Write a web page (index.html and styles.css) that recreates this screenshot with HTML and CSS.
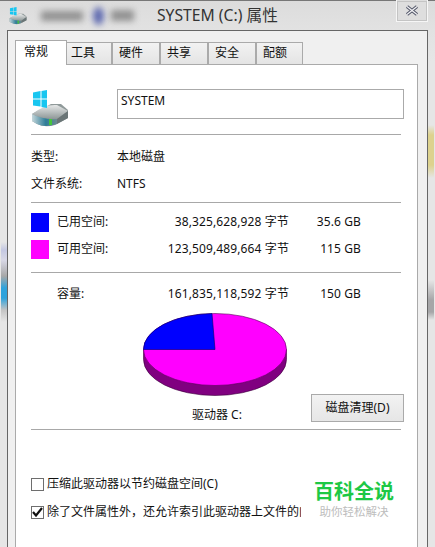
FILE: index.html
```html
<!DOCTYPE html>
<html lang="zh-CN">
<head>
<meta charset="utf-8">
<title>SYSTEM (C:) 属性</title>
<link rel="stylesheet" href="styles.css">
</head>
<body>
<svg class="defs" width="0" height="0" aria-hidden="true">
  <defs>
    <linearGradient id="driveTop" x1="0" y1="0" x2="0" y2="1">
      <stop offset="0" stop-color="#e6e8e8"/><stop offset="1" stop-color="#8d9696"/>
    </linearGradient>
    <linearGradient id="driveFront" x1="0" y1="0" x2="1" y2="0">
      <stop offset="0" stop-color="#c5d6da"/><stop offset="0.55" stop-color="#2f7d98"/><stop offset="1" stop-color="#6d8a90"/>
    </linearGradient>
    <symbol id="drive" viewBox="0 0 38 38">
      <path d="M1 24 L20 14 L30 14 L37 20 L37 28 L24 35 Q14 38 6 34 L1 31 Z" fill="#8f9999"/>
      <path d="M1 24 Q14 14 26 15 L37 21 L26 29 Q12 30 1 24 Z" fill="url(#driveTop)"/>
      <path d="M1 24 Q12 30 26 29 L26 34 Q14 38 6 34 L1 31 Z" fill="url(#driveFront)"/>
      <path d="M26 29 L37 21 L37 28 L26 34 Z" fill="#6a7576"/>
      <rect x="18" y="29" width="3" height="6" fill="#46c43c"/>
      <path d="M2 2.500 L9.500 1 V8.500 H2 Z M10.500 1 L16 0 V8.500 H10.500 Z M2 9.500 H9.500 V16.500 L2 15.500 Z M10.500 9.500 H16 V18 L10.500 17 Z" fill="#18c6f0"/>
    </symbol>
  </defs>
</svg>
<div class="window">
  <header class="titlebar">
    <svg class="title-icon"><use href="#drive"/></svg>
    <span class="blur blur-text-a"></span>
    <span class="blur blur-dot"></span>
    <span class="blur blur-text-b"></span>
    <h1 class="title">SYSTEM (C:) 属性</h1>
    <button class="close" type="button" aria-label="关闭">
      <svg width="14" height="11" viewBox="0 0 14 11"><path d="M2 1.500 L12 9.500 M12 1.500 L2 9.500" stroke="#54586a" stroke-width="3.400" fill="none"/><path d="M2 1.500 L12 9.500 M12 1.500 L2 9.500" stroke="#f4f4f6" stroke-width="1.200" fill="none"/></svg>
    </button>
  </header>
  <main class="dialog">
    <nav class="tabs">
      <span class="tab tab-active">常规</span>
      <span class="tab">工具</span>
      <span class="tab">硬件</span>
      <span class="tab">共享</span>
      <span class="tab">安全</span>
      <span class="tab tab-last">配额</span>
    </nav>
    <section class="sheet">
      <div class="name-row">
        <svg class="drive-icon"><use href="#drive"/></svg>
        <div class="name-box">SYSTEM</div>
      </div>
      <hr class="rule rule-a">
      <div class="info-row info-first"><span class="info-label">类型:</span><span>本地磁盘</span></div>
      <div class="info-row info-second"><span class="info-label">文件系统:</span><span>NTFS</span></div>
      <hr class="rule rule-b">
      <div class="space-row space-first"><i class="swatch swatch-used"></i><span class="space-label">已用空间:</span><span class="bytes">38,325,628,928 字节</span><span class="size">35.6 GB</span></div>
      <div class="space-row space-second"><i class="swatch swatch-free"></i><span class="space-label">可用空间:</span><span class="bytes">123,509,489,664 字节</span><span class="size">115 GB</span></div>
      <hr class="rule rule-c">
      <div class="space-row space-total"><i class="swatch"></i><span class="space-label">容量:</span><span class="bytes">161,835,118,592 字节</span><span class="size">150 GB</span></div>
      <div class="chart-area">
        <svg class="pie" width="146" height="86" viewBox="0 0 146 86">
          <path d="M0.500 36.500 V46.500 A71.500 36 0 0 0 143.500 46.500 V36.500 Z" fill="#800080" stroke="#3a003a" stroke-width="0.600"/>
          <ellipse cx="72" cy="36.500" rx="71.500" ry="36" fill="#ff00ff" stroke="#5a005a" stroke-width="0.600"/>
          <path d="M72 36.500 H0.500 A71.500 36 0 0 1 69 0.500 Z" fill="#0000ff" stroke="#00006a" stroke-width="0.600"/>
        </svg>
        <div class="chart-foot">
          <span class="drive-name">驱动器 C:</span>
          <button class="clean" type="button">磁盘清理(D)</button>
        </div>
      </div>
      <hr class="rule rule-d">
      <label class="check check-first"><i class="box"></i><span class="check-text">压缩此驱动器以节约磁盘空间(C)</span></label>
      <label class="check check-second"><i class="box"><svg width="11" height="10" viewBox="0 0 11 10"><path d="M1 5 L4 8.500 L10 1" stroke="#111" stroke-width="2.200" fill="none"/></svg></i><span class="check-text check-clip">除了文件属性外，还允许索引此驱动器上文件的内容</span></label>
    </section>
  </main>
</div>
<i class="edge edge-left"></i>
<i class="edge edge-right"></i>
<div class="watermark">
  <div class="wm-main">百科全说</div>
  <div class="wm-sub">助你轻松解决</div>
</div>
</body>
</html>
```
FILE: styles.css
```css
* { box-sizing: border-box; }
html, body { margin: 0; height: 100%; }
body {
  width: 435px;
  height: 547px;
  overflow: hidden;
  position: relative;
  background: #e3e3e3;
  font-family: "Noto Sans", "Noto Sans CJK SC", sans-serif;
  font-size: 12px;
  line-height: 16px;
  color: #111;
}
.defs { position: absolute; }
.window {
  height: 547px;
  border-top: 1px solid #777;
  background: linear-gradient(#dcdcdc, #e2e2e2 30px, #e6e6e6 60px);
}
.titlebar {
  height: 29px;
  position: relative;
  display: flex;
  align-items: center;
}
.title-icon { width: 18px; height: 18px; margin: 0 0 0 9px; }
.blur { display: block; filter: blur(3px); }
.blur-text-a { width: 42px; height: 10px; margin-left: 14px; background: #929292; }
.blur-dot { width: 11px; height: 18px; margin-left: 10px; background: #5f6ab0; border-radius: 50%; }
.blur-text-b { width: 23px; height: 11px; margin-left: 7px; background: #929292; }
.title {
  margin: 0 0 2px 23px;
  font-size: 15.700px;
  font-weight: 400;
  line-height: 20px;
  color: #333;
  white-space: nowrap;
}
.close {
  position: absolute;
  top: -1px;
  left: 396px;
  width: 32px;
  height: 22px;
  padding: 0;
  display: flex;
  align-items: center;
  justify-content: center;
  background: #dedede;
  border: 1px solid #f6f6f6;
  border-top: 0;
  outline: 1px solid #c4c4c4;
  outline-offset: -2px;
}
.dialog {
  width: 421px;
  height: 517px;
  margin-left: 7px;
  padding: 9px 9px 0 7px;
  background: #f0f0f0;
  border: 1px solid #666;
  border-bottom: 0;
}
.tabs {
  display: flex;
  align-items: flex-end;
  height: 24px;
  position: relative;
  z-index: 1;
}
.tab {
  width: 48px;
  height: 22px;
  padding: 2px 0 0 6px;
  background: linear-gradient(#f2f2f2, #e4e4e4);
  border: 1px solid #aaa;
  border-bottom: 0;
  border-left-width: 0;
  border-right-width: 2px;
}
.tab-active {
  width: 52px;
  height: 25px;
  margin-bottom: -1px;
  padding: 3px 0 0 8px;
  background: #fff;
  border-width: 1px 1px 0 1px;
}
.tab:nth-child(2) { width: 46px; padding-left: 4px; }
.tab-last { width: 46px; border-right-width: 1px; }
.sheet {
  width: 403px;
  height: 483px;
  background: #fff;
  border: 1px solid #aaa;
  border-bottom: 0;
  padding: 0 16px 0 15px;
}
.name-row { display: flex; height: 69px; padding-top: 24px; }
.drive-icon { width: 38px; height: 38px; margin: 1px 0 0 0; flex: none; }
.name-box {
  width: 287px;
  height: 30px;
  margin-left: 48px;
  padding: 3px 3px;
  border: 1px solid #aaa;
  flex: none;
}
.rule { height: 1px; margin: 0; border: 0; background: #a8a8a8; }
.info-row { display: flex; height: 16px; }
.info-label { width: 86px; }
.info-first { margin-top: 14px; }
.info-second { margin-top: 11px; }
.rule-b { margin-top: 10px; }
.space-row { display: flex; align-items: center; height: 19px; }
.swatch { width: 18px; height: 19px; flex: none; }
.swatch-used { background: #0000ff; }
.swatch-free { background: #ff00ff; }
.space-label { width: 70px; margin-left: 8px; }
.bytes { width: 162px; text-align: right; white-space: nowrap; letter-spacing: 0.120px; }
.size { width: 72px; text-align: right; white-space: nowrap; letter-spacing: 0.100px; }
.space-first span, .space-second span { margin-bottom: 2px; }
.space-first { margin-top: 10px; }
.space-second { margin-top: 8px; }
.rule-c { margin-top: 13px; }
.space-total { margin-top: 11px; }
.chart-area { height: 126px; }
.pie { display: block; margin: 0 0 0 112px; position: relative; top: 10px; }
.chart-foot {
  display: flex;
  justify-content: space-between;
  align-items: flex-start;
  height: 30px;
  margin: 5px -3px 0 0;
}
.drive-name { margin: 13px 0 0 161px; white-space: nowrap; }
.clean {
  width: 93px;
  height: 28px;
  padding: 0;
  font: inherit;
  color: #111;
  background: linear-gradient(#f2f2f2, #e6e6e6);
  border: 1px solid #aaa;
}
.check { display: flex; align-items: center; height: 16px; }
.check-first { margin-top: 46px; }
.check-second { margin-top: 12px; }
.box {
  width: 13px;
  height: 13px;
  flex: none;
  border: 1px solid #6e6e6e;
  background: #fff;
  margin-right: 3px;
  display: flex;
  align-items: center;
  justify-content: center;
}
.check-text { white-space: nowrap; }
.check-clip { width: 254px; overflow: hidden; }
.edge { position: absolute; top: 0; bottom: 0; width: 6px; }
.edge-left {
  left: 1px;
  background: linear-gradient(transparent 242px, #c4c8e2 250px, #d8d8e6 260px, #a8a8a8 276px, #2fa3dc 288px, #2fa3dc 298px, #c4c4c4 310px, transparent 322px);
}
.edge-right {
  left: 428px;
  background: linear-gradient(transparent 125px, #ddd28e 135px, #ddd28e 165px, transparent 178px, transparent 280px, #a6a6a8 300px, #a6a6a8 312px, transparent 320px);
}
.watermark {
  position: absolute;
  left: 314px;
  top: 480px;
  width: 80px;
  text-align: center;
}
.wm-main { font-size: 20px; line-height: 24px; font-weight: 700; color: #1ec845; white-space: nowrap; }
.wm-sub { font-size: 11.500px; line-height: 15px; color: #bdbdbd; white-space: nowrap; }
```
